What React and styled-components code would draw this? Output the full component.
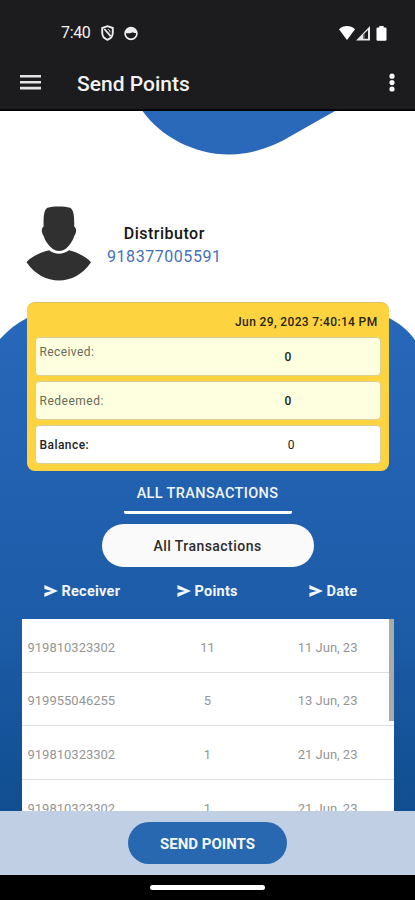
import React from "react";
import styled, { createGlobalStyle } from "styled-components";

const GlobalStyle = createGlobalStyle`
  * { box-sizing: border-box; }
  body { margin: 0; background: #000; font-family: Roboto, sans-serif; }
`;

const Screen = styled.div`
  width: 415px;
  height: 900px;
  display: flex;
  flex-direction: column;
  overflow: hidden;
  background: #000;
`;

const Top = styled.header`
  height: 111px;
  flex: none;
  background: #1c1c1e;
  border-bottom: 2px solid #050505;
  color: #f2f2f2;
`;

const StatusBar = styled.div`
  height: 56px;
  padding: 10px 28px 0 61px;
  display: flex;
  align-items: center;
`;

const Clock = styled.span`
  width: 40px;
  font-size: 16px;
  line-height: 20px;
  letter-spacing: -0.35px;
`;

const StatusIcon = styled.svg`
  display: block;
  flex: none;
  margin-left: ${(p) => p.$gap || 0}px;
`;

const Spacer = styled.div`
  flex: 1;
`;

const AppBar = styled.div`
  height: 53px;
  padding: 0 19px 0 20px;
  display: flex;
  align-items: center;
`;

const PageTitle = styled.h1`
  margin: 2px 0 0 36px;
  flex: 1;
  font-size: 21px;
  line-height: 26px;
  font-weight: 500;
  letter-spacing: 0;
`;

const IconButton = styled.button`
  border: 0;
  padding: 0;
  background: none;
  color: inherit;
  display: flex;
`;

const Content = styled.main`
  position: relative;
  height: 700px;
  flex: none;
  overflow: hidden;
  background: #fff;
`;

const Backdrop = styled.svg`
  position: absolute;
  inset: 0;
`;

const Stack = styled.div`
  position: relative;
  display: flex;
  flex-direction: column;
  align-items: center;
`;

const Profile = styled.section`
  width: 100%;
  height: 191px;
  padding: 95px 0 0 26px;
  display: flex;
`;

const Identity = styled.div`
  margin: 17px 0 0 16px;
  display: flex;
  flex-direction: column;
  align-items: center;
`;

const Role = styled.div`
  font-size: 16px;
  line-height: 22px;
  font-weight: 500;
  letter-spacing: 0.5px;
  color: #151515;
`;

const AccountNumber = styled.div`
  font-size: 16px;
  line-height: 23px;
  letter-spacing: 0.55px;
  color: #4270b8;
`;

const Card = styled.section`
  width: 362px;
  height: 169px;
  padding: 0 8px;
  border-radius: 8px;
  border-top: 1px solid #dfbd58;
  background: #fed340;
  display: flex;
  flex-direction: column;
  gap: 5px;
`;

const Stamp = styled.div`
  height: 29px;
  padding: 9px 3px 0 0;
  text-align: right;
  font-size: 12px;
  line-height: 20px;
  font-weight: 500;
  letter-spacing: 0.36px;
  color: #2b2410;
`;

const Balance = styled.div`
  height: 39px;
  flex: none;
  padding: 0 4px;
  border: 1px solid #d8cf94;
  border-radius: 4px;
  background: ${(p) => (p.$plain ? "#fff" : "#feffde")};
  color: ${(p) => (p.$plain ? "#222" : "#696a58")};
  font-weight: ${(p) => (p.$plain ? 500 : 400)};
  font-size: 12px;
  display: grid;
  grid-template-columns: 161px 1fr;
`;

const BalanceLabel = styled.span`
  letter-spacing: ${(p) => p.$track}px;
  line-height: ${(p) => (p.$raised ? 28 : 38)}px;
`;

const BalanceValue = styled.span`
  text-align: center;
  color: #222;
  font-weight: ${(p) => (p.$shifted ? 400 : 500)};
  padding-left: ${(p) => (p.$shifted ? 6 : 0)}px;
  line-height: 38px;
`;

const Heading = styled.h2`
  width: 168px;
  height: 43px;
  margin: 0;
  padding-top: 11px;
  border-bottom: 3px solid #fff;
  border-radius: 2px;
  display: flex;
  justify-content: center;
  white-space: nowrap;
  font-size: 14.5px;
  line-height: 23px;
  font-weight: 500;
  letter-spacing: 0.36px;
  color: #f1f6fd;
`;

const Filter = styled.button`
  width: 212px;
  height: 43px;
  margin-top: 10px;
  border: 0;
  border-radius: 22px;
  background: #fafafa;
  color: #2c2c2c;
  font: 500 14px/43px Roboto, sans-serif;
  letter-spacing: 0.45px;
`;

const Columns = styled.div`
  width: 372px;
  height: 52px;
  padding: 0 0 4px 22px;
  display: grid;
  grid-template-columns: 133px 132px 1fr;
  align-items: center;
`;

const Column = styled.div`
  display: flex;
  align-items: center;
  gap: 4px;
  font-size: 14.5px;
  line-height: 20px;
  font-weight: 700;
  letter-spacing: 0.25px;
  color: #f1f6fd;
`;

const ColumnLabel = styled.span`
  padding-top: 2px;
`;

const List = styled.div`
  width: 372px;
  height: 192px;
  display: flex;
  background: #fff;
`;

const Rows = styled.div`
  flex: 1;
`;

const Row = styled.div`
  height: 53.7px;
  padding: 3.6px 0 0 6px;
  border-bottom: 1px solid #dcdfdf;
  display: grid;
  grid-template-columns: 134px 92px 1fr;
  align-items: center;
  font-size: 13px;
  color: #959595;
`;

const Cell = styled.span`
  text-align: ${(p) => p.$align || "left"};
  padding-right: ${(p) => p.$end || 0}px;
`;

const Scrollbar = styled.div`
  width: 5px;
  height: 102px;
  margin-left: -5px;
  background: #a9abaa;
`;

const Footer = styled.footer`
  height: 64px;
  flex: none;
  display: flex;
  justify-content: center;
  padding-top: 11px;
  background: #c1cfe5;
`;

const SendButton = styled.button`
  width: 159px;
  height: 42px;
  border: 0;
  border-radius: 21px;
  background: #2768b0;
  color: #f3f7fd;
  font: 700 15px/43px Roboto, sans-serif;
`;

const NavBar = styled.div`
  height: 25px;
  padding-top: 10px;
  display: flex;
  justify-content: center;
`;

const Handle = styled.div`
  width: 115px;
  height: 5px;
  border-radius: 3px;
  background: #fff;
`;

const columns = ["Receiver", "Points", "Date"];

const transactions = [
  ["919810323302", "11", "11 Jun, 23"],
  ["919955046255", "5", "13 Jun, 23"],
  ["919810323302", "1", "21 Jun, 23"],
  ["919810323302", "1", "21 Jun, 23"],
];

function Arrow() {
  return (
    <svg width="14" height="12" viewBox="0 0 14 12">
      <path d="M0.4 0L14 6L0.4 12V8L7.6 6L0.4 4Z" fill="#f1f6fd" />
    </svg>
  );
}

function Avatar() {
  return (
    <svg width="65" height="75" viewBox="0 0 65 75" fill="#303030">
      <path d="M21.5 1.8C27 -.1 38.5 -.1 44 1.8C47.6 4 48.4 9 48.2 20.5C50.8 22 50.6 27 48.2 30C46.8 35.5 42.5 40.5 39.5 43C35.5 45.6 30.5 45.6 26.8 43C23.3 40 18.9 35 17.7 30C15.3 27 15.1 22 17.6 20.5C17.4 9 18.1 4 21.5 1.8Z" />
      <path d="M23 44.3C29 48.8 37 48.8 43 44.3C51 46.3 60 50.5 65 56.2C49 80.5 17 80.5 .5 56.2C5 50.5 15 46.3 23 44.3Z" />
    </svg>
  );
}

export default function App() {
  return (
    <Screen>
      <GlobalStyle />
      <Top>
        <StatusBar>
          <Clock>7:40</Clock>
          <StatusIcon width="13" height="16" viewBox="0 0 13 16" fill="none" stroke="#ededed">
            <path d="M6.5 1.2L11.8 3V7.5C11.8 11 9.8 13.6 6.5 14.8C3.2 13.6 1.2 11 1.2 7.5V3Z" strokeWidth="1.9" />
            <path d="M3.4 4L9.6 11.2" strokeWidth="1.8" />
            <path d="M6.8 4.4C8.4 4.8 9 5.7 9 7.4" strokeWidth="1" />
          </StatusIcon>
          <StatusIcon $gap={10} width="14" height="15" viewBox="0 0 14 15">
            <circle cx="7" cy="7.5" r="5.9" fill="none" stroke="#ededed" strokeWidth="1.7" />
            <path d="M1 6.9C2 0 12 0 13 6.9C10.8 7.2 9.3 6.8 8.6 6.2C7 7.2 4 7.4 1 6.9Z" fill="#ededed" />
          </StatusIcon>
          <Spacer />
          <StatusIcon width="16" height="14" viewBox="0 0 16 14">
            <path d="M0 3.2C4.4-1 11.6-1 16 3.2L8 14Z" fill="#fff" />
          </StatusIcon>
          <StatusIcon $gap={1} width="14" height="15" viewBox="0 0 14 15">
            <path d="M0 14.5L14 0V14.5Z" fill="#e8e8e8" />
            <path d="M7.4 12.8V8.4L12 4V12.8Z" fill="#1c1c1e" />
            <path d="M8.2 8V13" stroke="#777" strokeWidth="1" />
          </StatusIcon>
          <StatusIcon $gap={6} width="11" height="15" viewBox="0 0 11 15">
            <path d="M3.3 0H7.7V1.6H9.5Q10.5 1.6 10.5 2.7V13.5Q10.5 14.7 9.3 14.7H1.7Q.5 14.7 .5 13.5V2.7Q.5 1.6 1.5 1.6H3.3Z" fill="#fff" />
          </StatusIcon>
        </StatusBar>
        <AppBar>
          <IconButton aria-label="Menu">
            <svg width="21" height="15" viewBox="0 0 21 15">
              <path d="M0 1.3H21M0 7.2H21M0 13.1H21" stroke="#e4e4e4" strokeWidth="2.6" />
            </svg>
          </IconButton>
          <PageTitle>Send Points</PageTitle>
          <IconButton aria-label="More">
            <svg width="8" height="20" viewBox="0 0 8 20" fill="#f5f5f5">
              <circle cx="4" cy="3.2" r="2.6" />
              <circle cx="4" cy="9.6" r="2.6" />
              <circle cx="4" cy="16" r="2.6" />
            </svg>
          </IconButton>
        </AppBar>
      </Top>

      <Content>
        <Backdrop width="415" height="700" viewBox="0 0 415 700">
          <defs>
            <linearGradient id="sea" x1="0" y1="200" x2="0" y2="700" gradientUnits="userSpaceOnUse">
              <stop offset="0" stopColor="#2868ba" />
              <stop offset=".35" stopColor="#2261b0" />
              <stop offset=".65" stopColor="#1c5ba6" />
              <stop offset="1" stopColor="#104e90" />
            </linearGradient>
          </defs>
          <path d="M142.5 0C160 25 194 43.5 229 43.5C253 43.5 274 35 290 25.5C305 17 320 8.5 335 0Z" fill="#2a69ba" />
          <path d="M0 228C8 219 17 212 27 207C80 190 330 190 389 207C399 212 408 219 415 229V700H0Z" fill="url(#sea)" />
        </Backdrop>
        <Stack>
          <Profile>
            <Avatar />
            <Identity>
              <Role>Distributor</Role>
              <AccountNumber>918377005591</AccountNumber>
            </Identity>
          </Profile>
          <Card>
            <Stamp>Jun 29, 2023 7:40:14 PM</Stamp>
            <Balance>
              <BalanceLabel $raised $track={0.4}>Received:</BalanceLabel>
              <BalanceValue>0</BalanceValue>
            </Balance>
            <Balance>
              <BalanceLabel $track={0.5}>Redeemed:</BalanceLabel>
              <BalanceValue>0</BalanceValue>
            </Balance>
            <Balance $plain>
              <BalanceLabel $track={0.45}>Balance:</BalanceLabel>
              <BalanceValue $shifted>0</BalanceValue>
            </Balance>
          </Card>
          <Heading>ALL TRANSACTIONS</Heading>
          <Filter>All Transactions</Filter>
          <Columns>
            {columns.map((label) => (
              <Column key={label}>
                <Arrow />
                <ColumnLabel>{label}</ColumnLabel>
              </Column>
            ))}
          </Columns>
          <List>
            <Rows>
              {transactions.map(([receiver, points, date], i) => (
                <Row key={i}>
                  <Cell>{receiver}</Cell>
                  <Cell $align="center">{points}</Cell>
                  <Cell $align="right" $end={36}>{date}</Cell>
                </Row>
              ))}
            </Rows>
            <Scrollbar />
          </List>
        </Stack>
      </Content>

      <Footer>
        <SendButton>SEND POINTS</SendButton>
      </Footer>
      <NavBar>
        <Handle />
      </NavBar>
    </Screen>
  );
}
